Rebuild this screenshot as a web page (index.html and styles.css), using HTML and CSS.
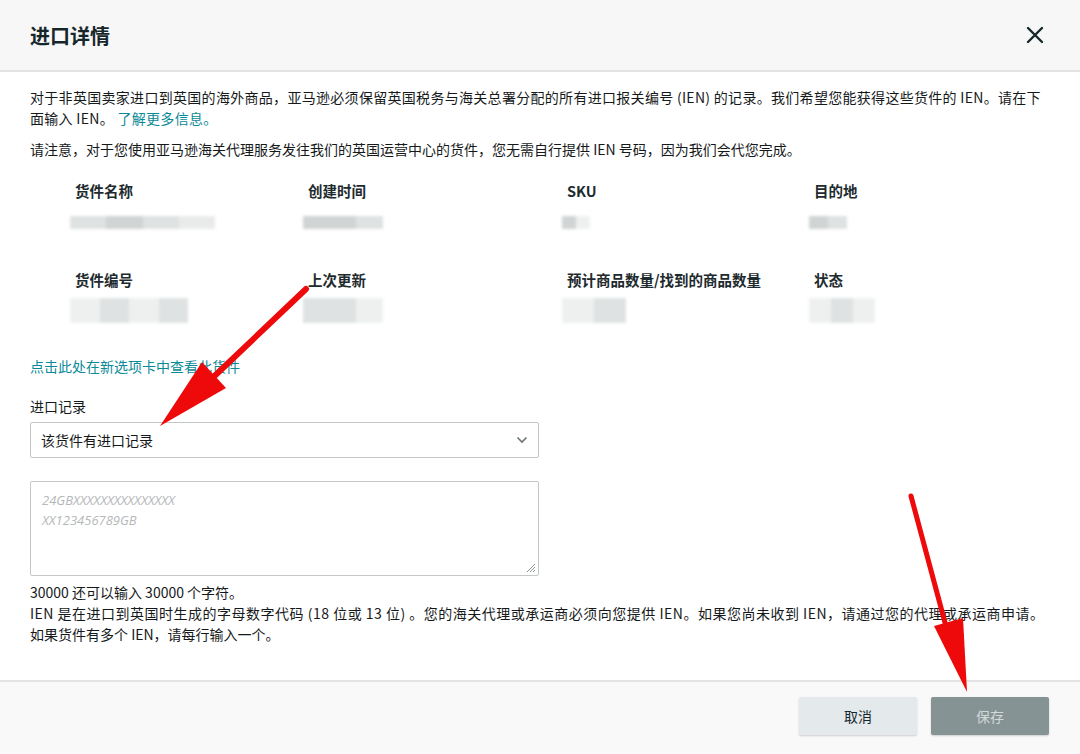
FILE: index.html
```html
<!DOCTYPE html>
<html lang="zh-CN">
<head>
<meta charset="utf-8">
<title>进口详情</title>
<link rel="stylesheet" href="styles.css">
</head>
<body>
<div class="modal">
  <header class="modal-header">
    <h1 class="title">进口详情</h1>
    <button class="close" aria-label="关闭">
      <svg width="18" height="18" viewBox="0 0 18 18"><path d="M2 2 L16 16 M16 2 L2 16" stroke="#16272b" stroke-width="2.4" stroke-linecap="round"/></svg>
    </button>
  </header>
  <main class="modal-body">
    <p class="intro">对于非英国卖家进口到英国的海外商品，亚马逊必须保留英国税务与海关总署分配的所有进口报关编号 (IEN) 的记录。我们希望您能获得这些货件的 IEN。请在下面输入 IEN。 <a class="link" href="#">了解更多信息。</a></p>
    <p class="note">请注意，对于您使用亚马逊海关代理服务发往我们的英国运营中心的货件，您无需自行提供 IEN 号码，因为我们会代您完成。</p>

    <div class="details">
      <div class="cell">
        <div class="label">货件名称</div>
        <div class="blur w145"><span class="b1"></span><span class="b2"></span><span class="b1"></span><span class="b3"></span></div>
      </div>
      <div class="cell">
        <div class="label">创建时间</div>
        <div class="blur w80"><span class="b2"></span><span class="b2"></span><span class="b1"></span></div>
      </div>
      <div class="cell">
        <div class="label">SKU</div>
        <div class="blur w28"><span class="b2"></span><span class="b0"></span></div>
      </div>
      <div class="cell">
        <div class="label">目的地</div>
        <div class="blur w38"><span class="b2"></span><span class="b1"></span></div>
      </div>
      <div class="cell">
        <div class="label">货件编号</div>
        <div class="blur tall w118"><span class="b0"></span><span class="b1"></span><span class="b0"></span><span class="b1"></span></div>
      </div>
      <div class="cell">
        <div class="label">上次更新</div>
        <div class="blur tall w80"><span class="b1"></span><span class="b1"></span><span class="b0"></span></div>
      </div>
      <div class="cell">
        <div class="label">预计商品数量/找到的商品数量</div>
        <div class="blur tall w64"><span class="b0"></span><span class="b1"></span></div>
      </div>
      <div class="cell">
        <div class="label">状态</div>
        <div class="blur tall w66"><span class="b0"></span><span class="b1"></span><span class="b0"></span></div>
      </div>
    </div>

    <a class="link view" href="#">点击此处在新选项卡中查看此货件</a>

    <label class="field-label">进口记录</label>
    <div class="select">
      <span>该货件有进口记录</span>
      <svg width="12" height="8" viewBox="0 0 12 8"><path d="M1.5 1.5 L6 6 L10.5 1.5" fill="none" stroke="#6b7475" stroke-width="1.6"/></svg>
    </div>

    <div class="textarea">
      <div class="placeholder">24GBXXXXXXXXXXXXXXX<br>XX123456789GB</div>
      <svg class="grip" width="12" height="12" viewBox="0 0 12 12"><path d="M11 3 L3 11 M11 6 L6 11 M11 9 L9 11" stroke="#8a9193" stroke-width="1"/></svg>
    </div>

    <div class="help">
      <p>30000 还可以输入 30000 个字符。</p>
      <p class="wide">IEN 是在进口到英国时生成的字母数字代码 (18 位或 13 位) 。您的海关代理或承运商必须向您提供 IEN。如果您尚未收到 IEN，请通过您的代理或承运商申请。</p>
      <p>如果货件有多个 IEN，请每行输入一个。</p>
    </div>
  </main>
  <footer class="modal-footer">
    <button class="btn cancel">取消</button>
    <button class="btn save">保存</button>
  </footer>
</div>

<svg class="arrows" width="1080" height="754" viewBox="0 0 1080 754">
  <line x1="306" y1="289" x2="205" y2="385" stroke="#ee0a0a" stroke-width="6" stroke-linecap="round"/>
  <polygon points="160,426 202,362 226,388" fill="#ee0a0a"/>
  <line x1="911" y1="496" x2="947" y2="630" stroke="#ee0a0a" stroke-width="5" stroke-linecap="round"/>
  <polygon points="967,692 934,626 963,618" fill="#ee0a0a"/>
</svg>
</body>
</html>
```

FILE: styles.css
```css
* { box-sizing: border-box; }
html, body { margin: 0; padding: 0; }
body {
  width: 1080px;
  height: 754px;
  overflow: hidden;
  background: #fff;
  font-family: "Noto Sans CJK SC", "Noto Sans", "Liberation Sans", sans-serif;
  color: #16191a;
  position: relative;
}
.modal {
  display: flex;
  flex-direction: column;
  height: 754px;
}
.modal-header {
  height: 72px;
  background: #f7f7f7;
  border-bottom: 2px solid #e3e3e3;
  display: flex;
  align-items: center;
  justify-content: space-between;
  padding: 0 36px 0 30px;
  flex-shrink: 0;
}
.title {
  margin: 0;
  font-size: 20px;
  font-weight: 700;
  color: #16272b;
}
.close {
  background: none;
  border: 0;
  padding: 0;
  display: flex;
  cursor: pointer;
}
.modal-body {
  flex: 1;
  padding: 15px 28px 0 30px;
  font-size: 14px;
}
.intro, .note {
  margin: 0;
  line-height: 21px;
}
.intro { margin-bottom: 10px; letter-spacing: 0.3px; }
.link {
  color: #0b8a97;
  text-decoration: none;
}
.details {
  display: grid;
  grid-template-columns: 233px 259px 247px 1fr;
  row-gap: 41px;
  margin: 21px 0 0 45px;
}
.cell {
  display: flex;
  flex-direction: column;
}
.label {
  font-size: 14.5px;
  font-weight: 700;
  color: #1e2b2e;
  line-height: 20px;
  white-space: nowrap;
}
.blur {
  display: flex;
  height: 13px;
  margin: 15px 0 0 -5px;
  filter: blur(1.5px);
  opacity: 0.85;
}
.blur.tall { height: 25px; margin-top: 8px; }
.blur span { flex: 1; }
.b0 { background: #eceeee; }
.b1 { background: #dadddd; }
.b2 { background: #c9cdcd; }
.b3 { background: #e6e8e8; }
.w145 { width: 145px; }
.w118 { width: 118px; }
.w80 { width: 80px; }
.w66 { width: 66px; }
.w64 { width: 64px; }
.w38 { width: 38px; }
.w28 { width: 28px; }
.view {
  display: block;
  margin-top: 33px;
  line-height: 20px;
}
.field-label {
  display: block;
  margin-top: 20px;
  line-height: 20px;
}
.select {
  margin-top: 6px;
  width: 509px;
  height: 36px;
  border: 1px solid #c3c7c8;
  border-radius: 2px;
  display: flex;
  align-items: center;
  justify-content: space-between;
  padding: 0 10px 0 10px;
  font-size: 14px;
  background: #fff;
}
.textarea {
  position: relative;
  margin-top: 23px;
  width: 509px;
  height: 95px;
  border: 1px solid #c3c7c8;
  border-radius: 2px;
  padding: 8px 11px;
}
.placeholder {
  color: #b4b8b9;
  font-style: italic;
  font-family: "Open Sans", "Noto Sans", sans-serif;
  font-size: 13px;
  line-height: 20px;
}
.grip {
  position: absolute;
  right: 2px;
  bottom: 2px;
}
.help {
  margin-top: 6px;
  line-height: 21px;
  font-size: 14px;
}
.help p { margin: 0; }
.help .wide { letter-spacing: 0.5px; }
.modal-footer {
  height: 74px;
  flex-shrink: 0;
  background: #f9f9f9;
  border-top: 2px solid #e3e3e3;
  display: flex;
  justify-content: flex-end;
  align-items: center;
  gap: 14px;
  padding: 0 31px 4px 0;
}
.btn {
  width: 118px;
  height: 38px;
  border: 0;
  border-radius: 2px;
  font-family: inherit;
  font-size: 14px;
}
.cancel {
  background: #e4eaeb;
  color: #16272b;
  box-shadow: 0 1px 2px rgba(0,0,0,0.18);
}
.save {
  background: #869394;
  color: #d2d9d9;
  box-shadow: 0 1px 2px rgba(0,0,0,0.18);
}
.arrows {
  position: absolute;
  left: 0;
  top: 0;
  pointer-events: none;
}
```
